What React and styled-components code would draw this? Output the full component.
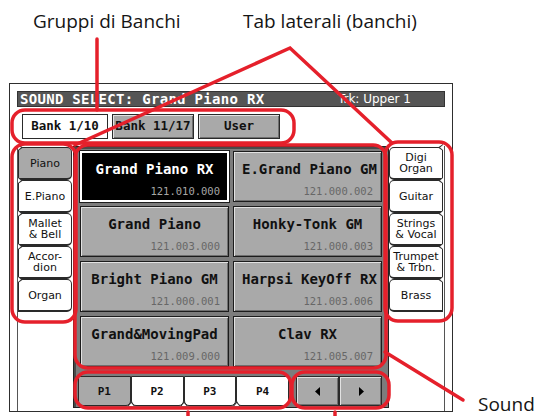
import React from "react";
import styled, { createGlobalStyle, css } from "styled-components";

const lcd = `"DejaVu Sans Mono", "Liberation Mono", monospace`;
const lcdSans = `"DejaVu Sans", "Liberation Sans", sans-serif`;
const RED = "#e5202b";

const GlobalStyle = createGlobalStyle`
  html, body {
    margin: 0;
    padding: 0;
    background: #fff;
  }
  body {
    width: 538px;
    height: 416px;
    overflow: hidden;
  }
`;

const leftTabs = [
  { label: "Piano", active: true },
  { label: "E.Piano" },
  { label: "Mallet\n& Bell" },
  { label: "Accor-\ndion" },
  { label: "Organ" },
];

const rightTabs = [
  { label: "Digi\nOrgan" },
  { label: "Guitar" },
  { label: "Strings\n& Vocal" },
  { label: "Trumpet\n& Trbn." },
  { label: "Brass" },
];

const sounds = [
  { name: "Grand Piano RX", code: "121.010.000", active: true },
  { name: "E.Grand Piano GM", code: "121.000.002" },
  { name: "Grand Piano", code: "121.003.000" },
  { name: "Honky-Tonk GM", code: "121.000.003" },
  { name: "Bright Piano GM", code: "121.000.001" },
  { name: "Harpsi KeyOff RX", code: "121.003.006" },
  { name: "Grand&MovingPad", code: "121.009.000" },
  { name: "Clav RX", code: "121.005.007" },
];

const bevel = css`
  background: #a9a9a9;
  box-shadow: inset 1px 1px 0 #e2e2e2, inset -1px -1px 0 #6f6f6f;
`;

const Page = styled.div`
  position: relative;
  width: 538px;
  height: 416px;
  overflow: hidden;
  font-family: "Open Sans", "Noto Sans", sans-serif;
`;

const Labels = styled.div`
  display: flex;
  height: 83px;
  box-sizing: border-box;
  padding: 8px 0 0 33px;
`;

const Label = styled.div`
  width: ${(p) => (p.$w ? `${p.$w}px` : "auto")};
  font-size: 19px;
  line-height: 26px;
  color: #151515;
  white-space: nowrap;
`;

const Body = styled.div`
  display: flex;
  align-items: flex-end;
`;

const SideLabel = styled(Label)`
  margin: 0 0 -5px 25px;
`;

const Screen = styled.div`
  margin-left: 9px;
  width: 444px;
  box-sizing: border-box;
  border: 1px solid #2e2e2e;
  padding: 7px 7px 0;
  background: #fff;
`;

const TitleBar = styled.div`
  display: flex;
  justify-content: space-between;
  align-items: center;
  height: 16px;
  box-sizing: border-box;
  padding: 0 33px 0 2px;
  background: #555;
  border: 1px solid #333;
  color: #fff;
`;

const Title = styled.span`
  font: bold 14px/16px ${lcd};
  letter-spacing: 0.3px;
`;

const Track = styled.span`
  font: 12px/16px ${lcdSans};
`;

const BankRow = styled.div`
  display: flex;
  gap: 4px;
  height: 25px;
  margin-top: 7px;
  padding-left: 5px;
`;

const BankTab = styled.div`
  width: ${(p) => p.$w}px;
  box-sizing: border-box;
  display: flex;
  align-items: center;
  justify-content: center;
  font: bold 12.5px/1 ${lcd};
  color: #111;
  border: 1px solid #2a2a2a;
  ${(p) => (p.$active ? css`background: #fff;` : bevel)}
`;

const Main = styled.div`
  display: flex;
  height: 265px;
  margin-top: 7px;
`;

const SideCol = styled.div`
  width: 56px;
  box-sizing: border-box;
  display: flex;
  flex-direction: column;
  padding-top: 1px;
  ${(p) =>
    p.$right
      ? css`
          border-right: 1px solid #555;
          align-items: flex-end;
          padding-right: 1px;
        `
      : css`
          border-left: 1px solid #555;
          align-items: flex-start;
        `}
`;

const SideTab = styled.div`
  position: relative;
  width: 54px;
  height: 33px;
  box-sizing: border-box;
  display: flex;
  align-items: center;
  justify-content: center;
  text-align: center;
  white-space: pre-line;
  font: 11px/11px ${lcdSans};
  color: #111;
  border: 1px solid #2a2a2a;
  border-bottom-width: 2px;
  border-radius: ${(p) => (p.$right ? "5px 0 0 5px" : "0 5px 5px 0")};
  background: ${(p) => (p.$active ? "#a9a9a9" : "#fff")};

  &::before,
  &::after {
    content: "";
    position: absolute;
    top: -4px;
    ${(p) => (p.$right ? "right: -1px;" : "left: -1px;")}
    width: 5px;
    height: 7px;
    background: #333;
    clip-path: ${(p) =>
      p.$right
        ? "polygon(100% 0, 0 50%, 100% 100%)"
        : "polygon(0 0, 100% 50%, 0 100%)"};
  }
  &::after {
    top: -3px;
    width: 3px;
    height: 5px;
    background: #fff;
  }
`;

const GridFrame = styled.div`
  width: 316px;
  height: 262px;
  box-sizing: border-box;
  display: flex;
  flex-direction: column;
  padding: 4px 6px 0;
  background: #7c7c7c;
  border: 1px solid #222;
  box-shadow: inset 2px 2px 0 #4a4a4a;
`;

const Cells = styled.div`
  display: grid;
  grid-template-columns: 149px 149px;
  grid-auto-rows: 51px;
  gap: 4px;
`;

const Cell = styled.div`
  box-sizing: border-box;
  display: flex;
  flex-direction: column;
  justify-content: space-between;
  padding: 9px 8px 4px;
  border: 1px solid #1c1c1c;
  ${bevel}
  ${(p) =>
    p.$active &&
    css`
      background: #000;
      border: 2px solid #fff;
      box-shadow: 0 0 0 1px #1c1c1c;
      padding: 8px 7px 3px;
    `}
`;

const SoundName = styled.div`
  font: bold 14px/16px ${lcd};
  text-align: center;
  white-space: nowrap;
  color: ${(p) => (p.$active ? "#fff" : "#111")};
`;

const SoundCode = styled.div`
  font: 10.5px/12px ${lcd};
  text-align: right;
  color: ${(p) => (p.$active ? "#a6a6a6" : "#676767")};
`;

const PageRow = styled.div`
  display: flex;
  height: 30px;
  margin: 9px 0 0 -2px;
`;

const PageTab = styled.div`
  position: relative;
  width: 53px;
  box-sizing: border-box;
  display: flex;
  align-items: center;
  justify-content: center;
  font: bold 11px/1 ${lcd};
  color: #111;
  border: 1px solid #2a2a2a;
  border-radius: 0 0 5px 5px;
  background: ${(p) => (p.$active ? "#a9a9a9" : "#fff")};

  ${(p) =>
    !p.$active &&
    css`
      &::before,
      &::after {
        content: "";
        position: absolute;
        bottom: -1px;
        left: -4px;
        width: 7px;
        height: 5px;
        background: #333;
        clip-path: polygon(50% 0, 100% 100%, 0 100%);
      }
      &::after {
        left: -3px;
        width: 5px;
        height: 3px;
        background: #fff;
      }
    `}
`;

const ArrowGroup = styled.div`
  display: flex;
  margin-left: 7px;
`;

const ArrowBtn = styled.div`
  width: 43px;
  box-sizing: border-box;
  display: flex;
  align-items: center;
  justify-content: center;
  border: 1px solid #2a2a2a;
  ${bevel}
`;

const Overlay = styled.svg`
  position: absolute;
  left: 0;
  top: 0;
  pointer-events: none;
`;

const Arrow = ({ dir }) => (
  <svg width="6" height="9" viewBox="0 0 6 9">
    <polygon
      points={dir === "left" ? "5,0 5,9 0,4.5" : "1,0 1,9 6,4.5"}
      fill="#000"
    />
  </svg>
);

const Annotations = () => (
  <Overlay width="538" height="416" viewBox="0 0 538 416">
    <g fill="none" stroke={RED} strokeWidth="3.5" strokeLinecap="round">
      <line x1="97" y1="39" x2="97" y2="110" />
      <polyline points="75,145 290,48 392,143" strokeLinejoin="miter" />
      <rect x="12" y="110" width="282" height="33" rx="13" />
      <rect x="12" y="144" width="64" height="178" rx="13" />
      <rect x="385" y="142" width="67" height="179" rx="13" />
      <rect x="75" y="145" width="311" height="223" rx="13" />
      <rect x="75" y="372" width="216" height="36" rx="13" />
      <rect x="292" y="372" width="97" height="36" rx="13" />
      <line x1="385" y1="352" x2="463" y2="400" />
      <line x1="188" y1="412" x2="188" y2="420" />
      <line x1="335" y1="412" x2="335" y2="420" />
    </g>
  </Overlay>
);

export default function App() {
  return (
    <Page>
      <GlobalStyle />
      <Labels>
        <Label $w={210}>Gruppi di Banchi</Label>
        <Label>Tab laterali (banchi)</Label>
      </Labels>
      <Body>
        <Screen>
          <TitleBar>
            <Title>SOUND SELECT: Grand Piano RX</Title>
            <Track>Trk: Upper 1</Track>
          </TitleBar>
          <BankRow>
            <BankTab $w={86} $active>
              Bank 1/10
            </BankTab>
            <BankTab $w={82}>Bank 11/17</BankTab>
            <BankTab $w={82}>User</BankTab>
          </BankRow>
          <Main>
            <SideCol>
              {leftTabs.map((t) => (
                <SideTab key={t.label} $active={t.active}>
                  {t.label}
                </SideTab>
              ))}
            </SideCol>
            <GridFrame>
              <Cells>
                {sounds.map((s) => (
                  <Cell key={s.name} $active={s.active}>
                    <SoundName $active={s.active}>{s.name}</SoundName>
                    <SoundCode $active={s.active}>{s.code}</SoundCode>
                  </Cell>
                ))}
              </Cells>
              <PageRow>
                {["P1", "P2", "P3", "P4"].map((p, i) => (
                  <PageTab key={p} $active={i === 0}>
                    {p}
                  </PageTab>
                ))}
                <ArrowGroup>
                  <ArrowBtn>
                    <Arrow dir="left" />
                  </ArrowBtn>
                  <ArrowBtn>
                    <Arrow dir="right" />
                  </ArrowBtn>
                </ArrowGroup>
              </PageRow>
            </GridFrame>
            <SideCol $right>
              {rightTabs.map((t) => (
                <SideTab key={t.label} $right>
                  {t.label}
                </SideTab>
              ))}
            </SideCol>
          </Main>
        </Screen>
        <SideLabel>Sound</SideLabel>
      </Body>
      <Annotations />
    </Page>
  );
}
